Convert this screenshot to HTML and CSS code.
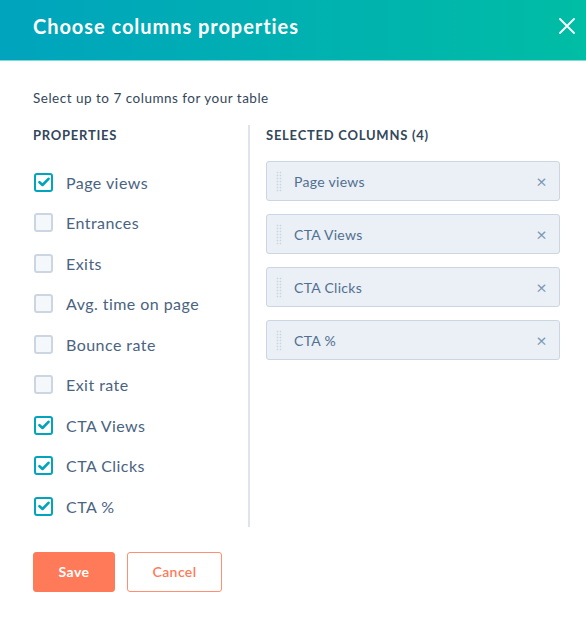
FILE: index.html
```html
<!DOCTYPE html>
<html>
<head>
<meta charset="utf-8">
<link rel="stylesheet" href="styles.css">
</head>
<body>
<div class="modal">
  <header class="header">
    <h1 class="title">Choose columns properties</h1>
    <button class="close" aria-label="Close">
      <svg width="16" height="16" viewBox="0 0 16 16"><path d="M1 1 L15 15 M15 1 L1 15" stroke="#fff" stroke-width="1.8" stroke-linecap="round"/></svg>
    </button>
  </header>
  <div class="body">
    <p class="hint">Select up to 7 columns for your table</p>
    <div class="cols">
      <div class="left">
        <h2 class="section">PROPERTIES</h2>
        <ul class="props">
          <li class="prop"><span class="cb on"><svg viewBox="0 0 12 10" width="12" height="10"><path d="M1.5 5.2 L4.5 8 L10.5 1.8" fill="none" stroke="#00a4bd" stroke-width="2.6" stroke-linecap="round" stroke-linejoin="round"/></svg></span>Page views</li>
          <li class="prop"><span class="cb"></span>Entrances</li>
          <li class="prop"><span class="cb"></span>Exits</li>
          <li class="prop"><span class="cb"></span>Avg. time on page</li>
          <li class="prop"><span class="cb"></span>Bounce rate</li>
          <li class="prop"><span class="cb"></span>Exit rate</li>
          <li class="prop"><span class="cb on"><svg viewBox="0 0 12 10" width="12" height="10"><path d="M1.5 5.2 L4.5 8 L10.5 1.8" fill="none" stroke="#00a4bd" stroke-width="2.6" stroke-linecap="round" stroke-linejoin="round"/></svg></span>CTA Views</li>
          <li class="prop"><span class="cb on"><svg viewBox="0 0 12 10" width="12" height="10"><path d="M1.5 5.2 L4.5 8 L10.5 1.8" fill="none" stroke="#00a4bd" stroke-width="2.6" stroke-linecap="round" stroke-linejoin="round"/></svg></span>CTA Clicks</li>
          <li class="prop"><span class="cb on"><svg viewBox="0 0 12 10" width="12" height="10"><path d="M1.5 5.2 L4.5 8 L10.5 1.8" fill="none" stroke="#00a4bd" stroke-width="2.6" stroke-linecap="round" stroke-linejoin="round"/></svg></span>CTA %</li>
        </ul>
      </div>
      <div class="right">
        <h2 class="section">SELECTED COLUMNS (4)</h2>
        <ul class="selected">
          <li class="card"><span class="grip"></span><span class="name">Page views</span><span class="x">×</span></li>
          <li class="card"><span class="grip"></span><span class="name">CTA Views</span><span class="x">×</span></li>
          <li class="card"><span class="grip"></span><span class="name">CTA Clicks</span><span class="x">×</span></li>
          <li class="card"><span class="grip"></span><span class="name">CTA %</span><span class="x">×</span></li>
        </ul>
      </div>
    </div>
    <div class="actions">
      <button class="btn save">Save</button>
      <button class="btn cancel">Cancel</button>
    </div>
  </div>
</div>
</body>
</html>
```
FILE: styles.css
```css
* { box-sizing: border-box; }
html, body { margin: 0; padding: 0; background: #fff; }
body { font-family: Lato, "Open Sans", sans-serif; color: #33475b; width: 586px; height: 633px; overflow: hidden; }
.header {
  height: 61px;
  background: linear-gradient(90deg, #00a4bd 0%, #00bda5 100%);
  border-bottom: 1px solid #7fd9d6;
  display: flex;
  align-items: center;
  justify-content: space-between;
  padding: 0 10px 0 33px;
}
.title { margin: 0; font-size: 20px; font-weight: 700; color: #fff; letter-spacing: 0.95px; position: relative; top: -4px; }
.close { background: none; border: 0; padding: 0; width: 18px; height: 18px; display: flex; align-items: center; justify-content: center; position: relative; top: -4px; }
.body { padding: 29px 26px 0 33px; }
.hint { margin: 0; font-size: 13.5px; line-height: 16px; letter-spacing: 0.5px; color: #33475b; }
.cols { display: flex; margin-top: 19px; }
.left { width: 217px; border-right: 2px solid #dfe3eb; }
.right { flex: 1; padding-left: 16px; }
.section { margin: 0; font-size: 13px; font-weight: 700; line-height: 16px; letter-spacing: 0.75px; color: #33475b; padding-top: 2px; }
.props { list-style: none; margin: 0; padding: 19px 0 0 0; }
.prop { display: flex; align-items: center; height: 40.5px; font-size: 16px; letter-spacing: 0.45px; color: #4a6381; }
.cb {
  width: 19px; height: 19px; margin: 0 13px 0 1px;
  border: 2px solid #cbd6e2; border-radius: 3px; background: #f5f8fa;
  display: flex; align-items: center; justify-content: center;
}
.cb.on { border-color: #00a4bd; background: #fff; }
.selected { list-style: none; margin: 0; padding: 18px 0 0 0; }
.card {
  display: flex; align-items: center; height: 40px; margin-bottom: 13px;
  background: #eaf0f6; border: 1px solid #cbd6e2; border-radius: 3px;
  padding: 0 12px 0 9px;
  font-size: 14px; letter-spacing: 0.3px; color: #516f90;
}
.grip {
  width: 6px; height: 21px; margin-right: 12px;
  background-image: radial-gradient(circle, #cbd6e2 0.8px, transparent 1.1px);
  background-size: 3px 3px;
}
.name { flex: 1; }
.x { font-size: 18px; color: #7c98b6; line-height: 1; }
.actions { display: flex; gap: 12px; margin-top: 25px; }
.btn {
  height: 40px; border-radius: 3px; font-family: Lato, "Open Sans", sans-serif;
  font-size: 14px; letter-spacing: 0.4px; font-weight: 700; padding: 0;
}
.save { width: 82px; background: #ff7a59; border: 1px solid #ff7a59; color: #fff; }
.cancel { width: 95px; background: #fff; border: 1px solid #ff8f73; color: #ff7a59; font-weight: 600; }
```
